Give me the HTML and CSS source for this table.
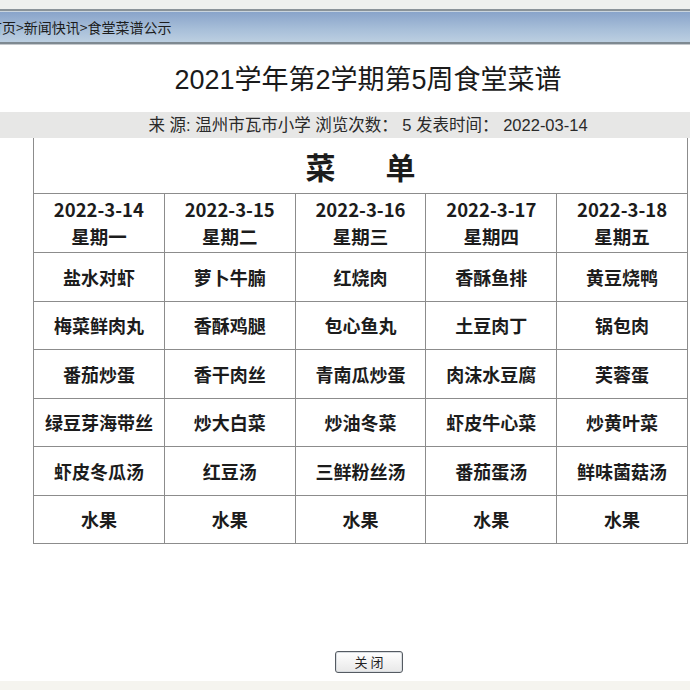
FILE: index.html
```html
<!DOCTYPE html>
<html lang="zh">
<head>
<meta charset="utf-8">
<link rel="stylesheet" href="styles.css">
</head>
<body>
<div class="topstrip"></div>
<div class="crumbbar"><span class="crumb">首页&gt;新闻快讯&gt;食堂菜谱公示</span></div>
<h1 class="title">2021学年第2学期第5周食堂菜谱</h1>
<div class="info"><span class="info-text">来 源: 温州市瓦市小学 浏览次数： 5 发表时间： 2022-03-14</span></div>
<table class="menu">
  <thead>
    <tr><th colspan="5" class="cap"><span>菜</span><span>单</span></th></tr>
    <tr class="head">
      <th>2022-3-14<br>星期一</th>
      <th>2022-3-15<br>星期二</th>
      <th>2022-3-16<br>星期三</th>
      <th>2022-3-17<br>星期四</th>
      <th>2022-3-18<br>星期五</th>
    </tr>
  </thead>
  <tbody>
    <tr><td>盐水对虾</td><td>萝卜牛腩</td><td>红烧肉</td><td>香酥鱼排</td><td>黄豆烧鸭</td></tr>
    <tr><td>梅菜鲜肉丸</td><td>香酥鸡腿</td><td>包心鱼丸</td><td>土豆肉丁</td><td>锅包肉</td></tr>
    <tr><td>番茄炒蛋</td><td>香干肉丝</td><td>青南瓜炒蛋</td><td>肉沫水豆腐</td><td>芙蓉蛋</td></tr>
    <tr><td>绿豆芽海带丝</td><td>炒大白菜</td><td>炒油冬菜</td><td>虾皮牛心菜</td><td>炒黄叶菜</td></tr>
    <tr><td>虾皮冬瓜汤</td><td>红豆汤</td><td>三鲜粉丝汤</td><td>番茄蛋汤</td><td>鲜味菌菇汤</td></tr>
    <tr><td>水果</td><td>水果</td><td>水果</td><td>水果</td><td>水果</td></tr>
  </tbody>
</table>
<div class="actions"><button class="close">关 闭</button></div>
<div class="bottomstrip"></div>
</body>
</html>
```

FILE: styles.css
```css
html, body {
  margin: 0;
  padding: 0;
  background: #ffffff;
  font-family: "Liberation Sans", "Noto Sans CJK SC", sans-serif;
  color: #1e1e1e;
  overflow: hidden;
}
.topstrip {
  height: 9px;
  background: #eef0ee;
}
.crumbbar {
  height: 31px;
  border-top: 2px solid #8a9399;
  border-bottom: 2px solid #7e8991;
  box-shadow: inset 0 1px 0 #c9d4de, 0 1px 0 #c4c8cc;
  background: linear-gradient(#87a2c9, #a8bfd9 60%, #bccfe1);
  display: flex;
  align-items: center;
  overflow: hidden;
}
.crumb {
  margin-left: -12px;
  font-size: 14px;
  color: #1c1c1c;
  white-space: nowrap;
  font-family: "Noto Sans CJK SC", sans-serif;
}
.title {
  margin: 0;
  height: 68px;
  box-sizing: border-box;
  padding: 20px 0 0 46px;
  font-size: 27px;
  line-height: 32px;
  font-weight: 400;
  text-align: center;
  color: #1a1a1a;
}
.info {
  height: 26px;
  background: #e7e7e6;
  text-align: center;
  padding-left: 46px;
  font-size: 16.5px;
  line-height: 26px;
  color: #2a2a2a;
}
.menu {
  margin-left: 33px;
  width: 655px;
  table-layout: fixed;
  border-collapse: collapse;
  font-family: "Noto Sans CJK SC", sans-serif;
  font-weight: 700;
  color: #1c1c1c;
}
.menu th, .menu td {
  border: 1.5px solid #8c8c8c;
  text-align: center;
  padding: 0;
}
.menu th.cap {
  border-top: none;
  height: 55px;
  font-size: 30px;
  line-height: 32px;
}
.cap span + span {
  margin-left: 50px;
}
.head th {
  height: 58px;
  font-size: 18.5px;
  line-height: 27px;
}
.menu td {
  height: 47.5px;
  font-size: 18px;
}
.actions {
  display: flex;
  justify-content: center;
  padding: 107px 0 0 48px;
}
.close {
  width: 68px;
  height: 22px;
  padding: 0;
  border: 1px solid #555b62;
  border-radius: 3px;
  background: linear-gradient(#ffffff, #e8e8e8);
  font-family: "Noto Sans CJK SC", sans-serif;
  font-size: 13px;
  line-height: 20px;
  color: #222;
  box-shadow: inset 0 0 0 1px #d8dce0;
}
.bottomstrip {
  height: 10px;
  margin-top: 8px;
  background: #f5f4ef;
}
```
